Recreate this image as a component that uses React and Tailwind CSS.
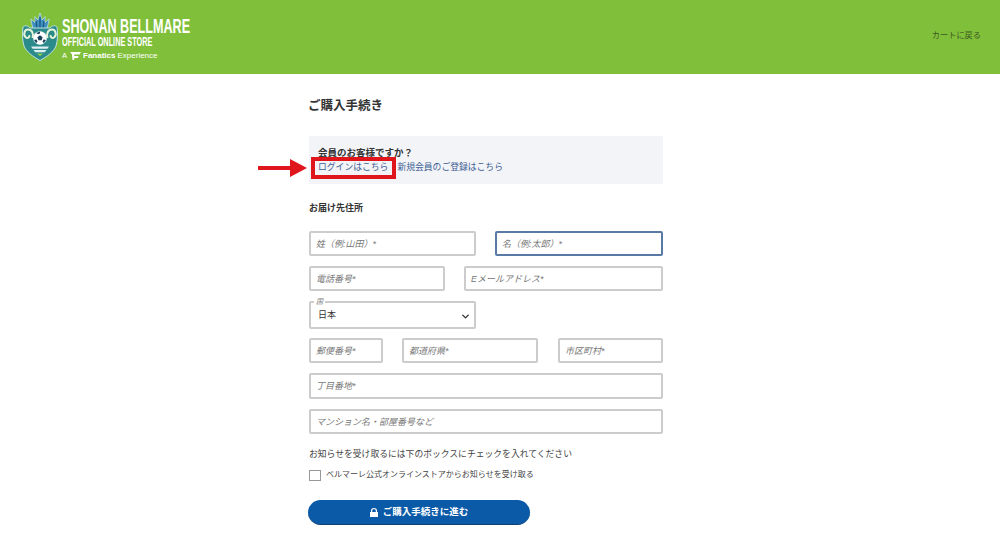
import { ChevronDown } from "lucide-react";

const font = { fontFamily: '"Liberation Sans", "Noto Sans CJK JP", sans-serif' };

function Field({ width, placeholder, focus, tall }) {
  return (
    <input
      readOnly
      placeholder={placeholder}
      className={`min-w-0 rounded-[2px] border-2 bg-white px-[5px] text-[9px] italic outline-none placeholder:text-[#777] ${width} ${
        tall ? "h-[26px]" : "h-[25px]"
      } ${focus ? "border-[#5a7aa6]" : "border-[#cccccc]"}`}
    />
  );
}

function Logo() {
  return (
    <svg width="36" height="48" viewBox="0 0 36 48" className="shrink-0">
      {/* trident crown */}
      <path d="M18 0l2.2 7 3-3.5-.4 6 4.4-3.5-2 9.5H10.800l-2-9.500 4.400 3.500-.4-6 3 3.500z" fill="#3f8fc0" stroke="#cfe6ee" strokeWidth=".7" />
      <path d="M18 4v12M14 8l1 8M22 8l-1 8" stroke="#17557f" strokeWidth="1.200" />
      {/* shield */}
      <path d="M8 15h20c2-2.500 5-3 7-1 1 7 .6 13-1 19-2.500 6-9 10.500-16 14.500C11 43.500 4.500 39 2 33 .4 27 0 21 1 14c2-2 5-1.500 7 1z" fill="#2b8a8a" stroke="#bfe0e6" strokeWidth="1" />
      {/* sea curls */}
      <path d="M10.500 25c1.500-4-.5-8.500-4.500-8.500s-5 6-2 8c2 1.300 4-.5 3.200-2.300" fill="none" stroke="#e6f4d6" strokeWidth="2" />
      <path d="M25.500 25c-1.500-4 .5-8.500 4.500-8.500s5 6 2 8c-2 1.300-4-.5-3.200-2.300" fill="none" stroke="#e6f4d6" strokeWidth="2" />
      {/* ball */}
      <circle cx="18" cy="25" r="6.800" fill="#fff" />
      <path d="M18 22.300l2.600 1.900-1 3h-3.200l-1-3z" fill="#17425a" />
      <path d="M18 18.600v1.800l-2 .9-1.700-1.300zM24 27l-2.400-.4-1 2 1.300 1.700zM12 27l2.400-.4 1 2-1.300 1.700z" fill="#17425a" />
      {/* stripes */}
      <path d="M9 33.500h18l-1.600 2.200H10.600zM11.500 37h13l-1.800 2.200h-9.400z" fill="#dff0f5" />
      <path d="M15 40.500h6l-3 2.800z" fill="#8ccf55" />
    </svg>
  );
}

export default function App() {
  return (
    <div className="min-h-[534px] bg-white text-[#333]" style={font}>
      <header className="flex h-[74px] items-center justify-between bg-[#80bf3a] pl-[22px] pr-[19px]">
        <div className="flex items-center gap-[4px]">
          <Logo />
          <div className="pt-[3px] text-white">
            <div className="origin-left scale-x-[0.63] whitespace-nowrap text-[20px] leading-[20px] font-bold">SHONAN BELLMARE</div>
            <div className="origin-left scale-x-[0.61] whitespace-nowrap text-[12px] leading-[13px] font-bold">OFFICIAL ONLINE STORE</div>
            <div className="mt-[2px] flex items-center gap-[2px] whitespace-nowrap text-[7.5px] leading-[10px]">
              <span className="mr-[1px]">A</span>
              <svg width="11" height="8" viewBox="0 0 11 8">
                <path d="M0 0h11l-1.500 2.500H4.500L4 4h4.500L8 6H4.500L4 8H2.500L2 2.500z" fill="#fff" />
              </svg>
              <span className="text-[8px] font-bold">Fanatics</span>
              <span className="text-[8px]">Experience</span>
            </div>
          </div>
        </div>
        <a className="-mt-[1px] text-[8.2px] text-[#3c5a22]">カートに戻る</a>
      </header>

      <main className="ml-[309px] w-[354px] pt-[23px]">
        <h1 className="-ml-[1px] text-[12.5px] leading-[18px] font-bold text-[#333]">ご購入手続き</h1>

        <div className="mt-[21px] h-[48px] bg-[#f3f4f8] pl-[9px] pt-[10px]">
          <p className="text-[9.5px] leading-[13px] font-bold">会員のお客様ですか？</p>
          <div className="relative mt-[2px] flex gap-[9px] text-[8.8px] leading-[13px] text-[#3f5f94]">
            <a>ログインはこちら</a>
            <a>新規会員のご登録はこちら</a>
            <span className="absolute -left-[7px] -top-[4px] h-[22px] w-[85px] border-[4px] border-[#e0161d]" />
            <svg width="50" height="20" viewBox="0 0 50 20" className="absolute -left-[60px] -top-[3px]">
              <path d="M0 8h32V1l17 9-17 9v-7H0z" fill="#e0161d" />
            </svg>
          </div>
        </div>

        <h2 className="mt-[18px] text-[9px] leading-[13px] font-bold">お届け先住所</h2>

        <div className="mt-[16px] flex flex-col gap-[10px]">
          <div className="flex gap-[19px]">
            <Field width="w-[167px]" placeholder="姓（例:山田）*" />
            <Field width="w-[168px]" placeholder="名（例:太郎）*" focus />
          </div>
          <div className="flex gap-[19px]">
            <Field width="w-[136px]" placeholder="電話番号*" />
            <Field width="w-[199px]" placeholder="Eメールアドレス*" />
          </div>
          <div className="relative flex h-[28px] w-[167px] items-center justify-between rounded-[2px] border-2 border-[#cccccc] pl-[7px] pr-[3px] pt-[2px] text-[9px]">
            <span className="absolute -top-[6px] left-[3px] bg-white px-[2px] text-[7px] leading-[9px] italic text-[#777]">国</span>
            <span>日本</span>
            <ChevronDown size={11} strokeWidth={3} />
          </div>
          <div className="mt-[-1px] flex gap-[19px]">
            <Field width="w-[74px]" placeholder="郵便番号*" />
            <Field width="w-[136px]" placeholder="都道府県*" />
            <Field width="ml-[1px] w-[105px]" placeholder="市区町村*" />
          </div>
          <Field width="w-full" placeholder="丁目番地*" tall />
          <Field width="w-full" placeholder="マンション名・部屋番号など" />
        </div>

        <p className="mt-[14px] text-[8.8px] leading-[13px] text-[#444]">お知らせを受け取るには下のボックスにチェックを入れてください</p>
        <label className="mt-[8px] flex items-center gap-[5px] text-[8px] leading-[12px] text-[#444]">
          <span className="h-[11px] w-[12px] border border-[#999] bg-white" />
          ベルマーレ公式オンラインストアからお知らせを受け取る
        </label>

        <button className="-ml-[1px] mt-[19px] flex h-[25px] w-[222px] items-center justify-center gap-[5px] rounded-full border-b-[1.5px] border-[#123f73] bg-[#0a5aa8] text-[9.5px] font-bold text-white">
          <svg width="8" height="9" viewBox="0 0 8 9">
            <path d="M1 4V2.800a3 2.800 0 0 1 6 0V4h1v5H0V4zm1.200 0h3.600V2.800a1.800 1.700 0 0 0-3.600 0z" fill="#fff" />
          </svg>
          ご購入手続きに進む
        </button>
      </main>
    </div>
  );
}
